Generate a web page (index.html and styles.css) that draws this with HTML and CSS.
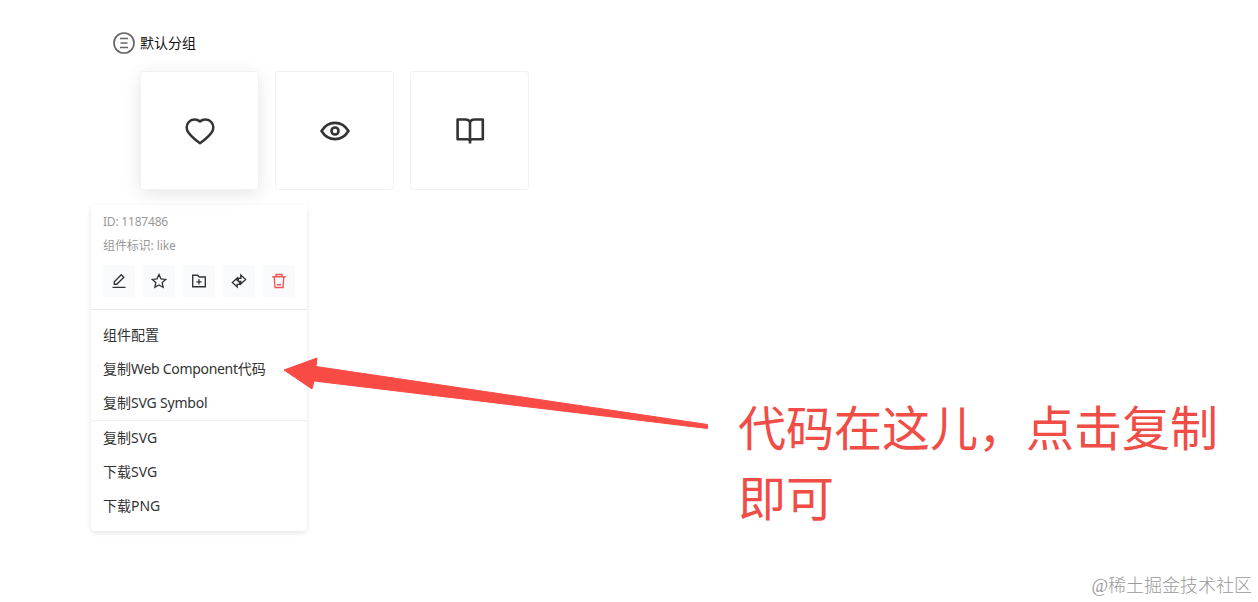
FILE: index.html
```html
<!DOCTYPE html>
<html lang="zh-CN">
<head>
    <meta charset="UTF-8">
    <meta name="viewport" content="width=device-width, initial-scale=1.0">
    <title>默认分组</title>
    <link rel="stylesheet" href="styles.css">
</head>
<body>
    <main class="page">
        <div class="group-title">
            <svg class="group-icon" viewBox="0 0 22 22">
                <circle cx="11" cy="11" r="10"/>
                <path d="M7 6.500h8M7.500 11h7M7 15.500h8"/>
            </svg>
            <span>默认分组</span>
        </div>

        <div class="icon-list">
            <div class="icon-card active">
                <svg viewBox="0 0 32 32">
                    <path d="M16 6.500C19 3.700 24.400 3.900 27.200 7C30 10.200 29.900 14.700 27.200 18C24.500 21.600 20.300 25.100 16 28.200C11.700 25.100 7.500 21.600 4.800 18C2.100 14.700 2 10.200 4.800 7C7.600 3.900 13 3.700 16 6.500Z"/>
                </svg>
            </div>
            <div class="icon-card">
                <svg viewBox="0 0 32 32">
                    <path d="M2.500 16C6 10.400 10.600 7.900 16 7.900C21.400 7.900 26 10.400 29.500 16C26 21.600 21.400 24.100 16 24.100C10.600 24.100 6 21.600 2.500 16Z"/>
                    <circle cx="16" cy="16" r="3.500"/>
                </svg>
            </div>
            <div class="icon-card">
                <svg viewBox="0 0 32 32">
                    <path d="M16 6.800C15 5 13.700 4.500 11.500 4.500H3.600V24.300H13.500C14.900 24.300 15.600 24.900 16 26.200C16.400 24.900 17.100 24.300 18.500 24.300H28.800V4.500H20.500C18.300 4.500 17 5 16 6.800ZM16 6.800V28.400"/>
                </svg>
            </div>
        </div>

        <div class="menu">
            <div class="menu-info">
                <p class="info-id">ID: 1187486</p>
                <p class="info-name">组件标识: like</p>
                <div class="actions">
                    <button type="button" aria-label="编辑">
                        <svg viewBox="0 0 16 16"><path d="M1.500 14.300H14.500M3.300 11.200V8.700L10.300 1.700L12.800 4.200L5.800 11.200Z"/></svg>
                    </button>
                    <button type="button" aria-label="收藏">
                        <svg viewBox="0 0 16 16"><path d="M8 1.500L10 5.800L14.700 6.400L11.200 9.600L12.100 14.300L8 12L3.900 14.300L4.800 9.600L1.300 6.400L6 5.800Z"/></svg>
                    </button>
                    <button type="button" aria-label="添加">
                        <svg viewBox="0 0 16 16"><path d="M1.700 2.200H6.600L8.300 4H14.300V13.700H1.700ZM8 6.200V11.400M5.400 8.800H10.600"/></svg>
                    </button>
                    <button type="button" aria-label="移动">
                        <svg viewBox="0 0 16 16"><path d="M9.800 5.200V2L14.600 6.500L9.800 11V8.500H7.300V5.200ZM6.200 8V5L1.400 9.500L6.200 14V11.300H8.700V8.500"/></svg>
                    </button>
                    <button type="button" class="danger" aria-label="删除">
                        <svg viewBox="0 0 16 16"><path d="M1.300 3.700H14.700M5 3.500V1.500H11V3.500M3.200 4L4 14.500H12L12.800 4M6 11.700H10"/></svg>
                    </button>
                </div>
            </div>
            <ul class="menu-list">
                <li>组件配置</li>
                <li>复制<span class="latin-web">Web Component</span>代码</li>
                <li>复制<span class="latin-symbol">SVG Symbol</span></li>
            </ul>
            <ul class="menu-list last">
                <li>复制SVG</li>
                <li>下载SVG</li>
                <li>下载PNG</li>
            </ul>
        </div>
    </main>

    <svg class="arrow" viewBox="0 0 430 75">
        <polygon points="2,14 35,2 34,10.500 425.500,68.500 425.500,72.500 32,25 30,33"/>
    </svg>
    <p class="note">代码在这儿，点击复制即可</p>
    <p class="watermark">@稀土掘金技术社区</p>
</body>
</html>
```

FILE: styles.css
```css
body {
    font-family: "Noto Sans", "Noto Sans CJK SC", sans-serif;
    background-color: #fff;
    color: #333;
    margin: 0;
    width: 1258px;
    height: 602px;
    overflow: hidden;
    position: relative;
}

p, ul {
    margin: 0;
    padding: 0;
}

svg {
    fill: none;
    stroke: currentColor;
}

.page {
    padding: 31px 0 0 91px;
}

.group-title {
    display: flex;
    align-items: center;
    gap: 5px;
    height: 24px;
    padding-left: 22px;
    font-size: 14px;
    color: #111;
}

.group-title span {
    padding-bottom: 2px;
}

.group-icon {
    width: 22px;
    height: 22px;
    stroke-width: 1.7;
    color: #666;
}

.icon-list {
    display: flex;
    gap: 16px;
    padding: 16px 0 0 49px;
}

.icon-card {
    display: flex;
    align-items: center;
    justify-content: center;
    box-sizing: border-box;
    width: 119px;
    height: 119px;
    border: 1px solid #f2f2f2;
    border-radius: 3px;
}

.icon-card svg {
    width: 32px;
    height: 32px;
    stroke-width: 2.6;
    stroke-linejoin: round;
}

.icon-card.active {
    box-shadow: 0 4px 18px rgba(0, 0, 0, 0.1);
}

.menu {
    box-sizing: border-box;
    width: 216px;
    margin-top: 15px;
    border-radius: 4px;
    box-shadow: 0 2px 5px rgba(0, 0, 0, 0.1);
}

.menu-info {
    padding: 5px 12px 12px;
    border-bottom: 1px solid #e8e8e8;
}

.menu-info p {
    font-size: 12px;
    line-height: 24px;
    color: #999;
}

.info-id {
    letter-spacing: -0.2px;
}

.info-name {
    letter-spacing: -0.1px;
}

.actions {
    display: flex;
    gap: 8px;
    margin-top: 7px;
}

.actions button {
    display: flex;
    align-items: center;
    justify-content: center;
    width: 32px;
    height: 32px;
    padding: 0;
    border: none;
    border-radius: 3px;
    background-color: #f9fafb;
    color: #333;
}

.actions svg {
    width: 16px;
    height: 16px;
    stroke-width: 1.35;
}

.actions .danger {
    color: #f25555;
}

.menu-list {
    list-style: none;
    padding-top: 8px;
}

.menu-list.last {
    padding: 0 0 8px;
    border-top: 1px solid #eee;
}

.menu-list li {
    height: 34px;
    line-height: 34px;
    padding-left: 12px;
    font-size: 14px;
    white-space: nowrap;
}

.latin-web {
    letter-spacing: -0.3px;
}

.latin-symbol {
    letter-spacing: -0.2px;
}

/* annotation over the page */
.arrow {
    position: absolute;
    left: 282px;
    top: 356px;
    width: 430px;
    height: 75px;
    color: #f94b45;
}

.arrow polygon {
    fill: currentColor;
    stroke-width: 1;
    stroke-linejoin: round;
}

.note {
    position: absolute;
    left: 738px;
    top: 390px;
    width: 484px;
    font-family: "Noto Sans CJK SC", sans-serif;
    font-size: 48px;
    line-height: 70px;
    color: #f04d47;
}

.watermark {
    position: absolute;
    right: 6px;
    bottom: 3px;
    font-family: "Liberation Serif", "Noto Sans CJK SC", serif;
    font-weight: 300;
    font-size: 18px;
    line-height: 26px;
    color: #999;
}
```
